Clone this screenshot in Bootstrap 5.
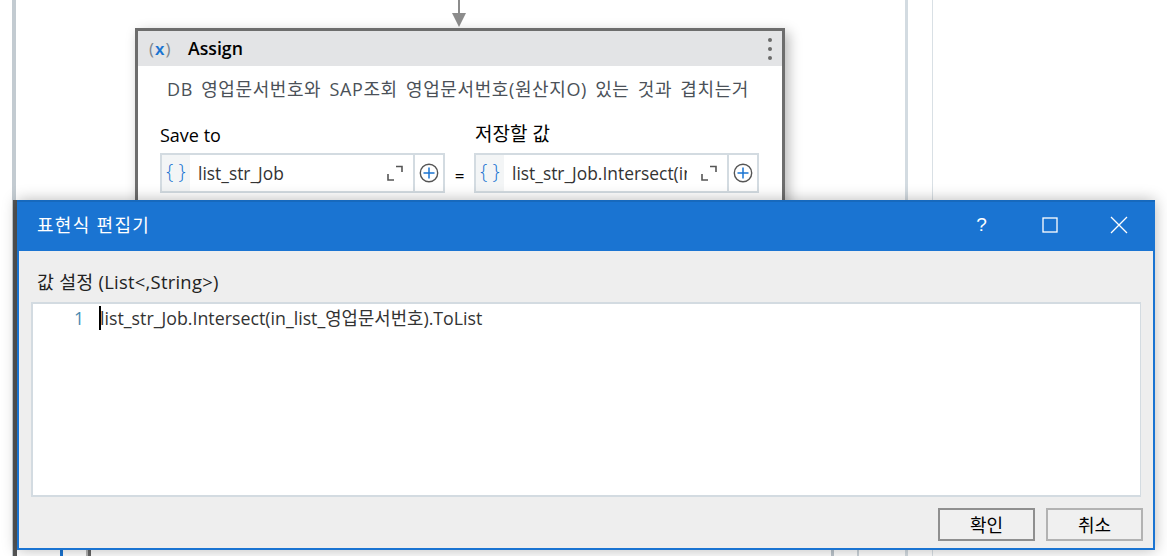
<!DOCTYPE html>
<html lang="ko"><head><meta charset="utf-8"><title>표현식 편집기</title>
<link rel="stylesheet" href="https://cdn.jsdelivr.net/npm/bootstrap@5.3.0/dist/css/bootstrap.min.css">
<style>
html,body{margin:0;height:100%;overflow:hidden;background:#fff}
body{font-family:"Open Sans","Noto Sans CJK KR",sans-serif;font-size:18px;color:#000}
.stage{position:relative;width:1167px;height:556px;overflow:hidden;background:#fff}
.vline{position:absolute;top:0;bottom:0}
.vl-a{left:12px;width:4px;background:#c3cbd1}
.vl-a2{left:13px;width:4px;top:200px;background:#555}
.vl-b{left:905px;width:3px;background:#d3dbe1}
.vl-c{left:932px;width:1px;background:#d9e0e5}
.vl-d{left:60px;width:3px;top:540px;background:#1a74d2}
.vl-e{left:86px;width:5px;top:540px;background:#666;border-left:2px solid #b5b5b5}
.vl-f{left:831px;width:3px;top:540px;background:#bcc5cc}
.vl-g{left:857px;width:2px;top:540px;background:#ccd4da}
.arrow{position:absolute;left:451px;top:0}
.activity{position:absolute;left:135px;top:28px;width:650px;height:190px;border:3px solid #6d6d6d;background:#fff;box-shadow:4px 4px 12px rgba(0,0,0,.28)}
.act-head{height:35px;background:#e3e4e6;padding:0 0 0 11px}
.act-title{font-weight:600;font-size:17.7px;margin-left:15px}
.xicon{width:24px;font-size:17px;color:#7d8790;white-space:nowrap;letter-spacing:1px;line-height:1}
.xicon b{color:#1a74d2;font-weight:800;font-family:"Liberation Sans",sans-serif}
.kebab{width:5px;margin:0 9px 0 auto}
.kebab i{display:block;width:4px;height:4px;border-radius:50%;background:#6a6a6a;margin:5px 0}
.act-desc{color:#4b5158;font-size:18px;line-height:24px;padding:11px 0 0 29px;white-space:nowrap;letter-spacing:.6px;word-spacing:3px}
.fields{padding:22px 0 0 22px}
.lbl{font-size:18px;line-height:24px;height:30px;white-space:nowrap}
.lbl-ko{font-size:19px;padding-left:1px;line-height:22px}
.fbox{height:40px;width:285px;border:2px solid #d3dbe1;background:#fff}
.fbrace{width:28px;align-self:stretch;background:#f3f5f6;color:#1a74d2;font-size:20px;font-weight:300;line-height:34px;text-align:center;flex:none}
.ftext{font-size:17.4px;color:#333;padding-left:8px;white-space:nowrap;overflow:hidden}
.ftext-clip{width:183px;flex:none}
.fexpand{margin:0 10px 0 auto;flex:none}
.fplus{border-left:2px solid #d3dbe1;flex:none;width:30px}
.eqs{width:29px;font-size:17px;line-height:17px;padding-top:44px;text-align:center}
.dialog{position:absolute;left:17px;top:200px;width:1138px;height:350px;background:#eee;border:2px solid #1a74d2;border-top:0;box-shadow:0 0 14px rgba(0,0,0,.28)}
.dlg-head{height:51px;background:#1a74d2;color:#fff;padding:0 0 3px 20px;margin:0 -2px;border-top:2px solid #1769bd}
.dlg-title{font-size:18px;letter-spacing:1.3px}
.dlg-ctl{margin-left:auto;margin-right:2px}
.dlg-ctl span{width:69px;height:32px}
.dlg-q{font-size:19px;font-family:"Liberation Sans",sans-serif;font-weight:400;padding-left:2px}
.val-lbl{font-size:18.4px;line-height:24px;padding:19px 0 0 18px;color:#222;letter-spacing:.25px}
.editor{margin:8px 12px 0 12px;height:195px;background:#fff;border:2px solid #d3dbe1;border-right-width:1px}
.gutter{width:51px;text-align:right;color:#4a8bb0;font-size:17.6px;line-height:24px;flex:none;padding-top:2px}
.codeline{font-size:17.8px;line-height:24px;color:#333;padding:2px 0 0 16px;position:relative;white-space:nowrap}
.caret-bar{position:absolute;left:15px;top:2px;width:2px;height:24px;background:#000}
.dlg-foot{padding:11px 10px 0 0;gap:11px}
.dbtn{width:97px;height:33px;border:2px solid #8f8f8f;background:#f0f0f0;font-size:18px;line-height:28px;padding:0;border-radius:0;color:#000}
.dbtn-alt{border-color:#b2b2b2}
</style></head><body>
<div class="stage">
<div class="vline vl-a"></div><div class="vline vl-a2"></div><div class="vline vl-b"></div><div class="vline vl-c"></div>
<div class="vline vl-d"></div><div class="vline vl-e"></div><div class="vline vl-f"></div><div class="vline vl-g"></div>
<svg class="arrow" width="16" height="28" viewBox="0 0 16 28"><path d="M8 0V14" stroke="#8c8c8c" stroke-width="2"/><path d="M1 13H15L8 27Z" fill="#8c8c8c"/></svg>
<div class="activity">
  <div class="act-head d-flex align-items-center">
    <span class="xicon">(<b>x</b>)</span><span class="act-title">Assign</span>
    <span class="kebab"><i></i><i></i><i></i></span>
  </div>
  <div class="act-desc">DB 영업문서번호와 SAP조회 영업문서번호(원산지O) 있는 것과 겹치는거</div>
  <div class="fields d-flex">
    <div>
      <div class="lbl">Save to</div>
      <div class="fbox d-flex align-items-center">
        <span class="fbrace">{ }</span><span class="ftext">list_str_Job</span>
        <svg class="fexpand" width="16" height="16" viewBox="0 0 16 16" fill="none" stroke="#555" stroke-width="1.6"><path d="M9 1.500H15V7M1 9V15H7"/></svg>
        <span class="fplus d-flex align-items-center justify-content-center align-self-stretch"><svg width="20" height="20" viewBox="0 0 20 20" fill="none"><circle cx="10" cy="10" r="8.700" stroke="#555" stroke-width="1.400"/><path d="M10 4.500V15.500M4.500 10H15.500" stroke="#1a74d2" stroke-width="1.500"/></svg></span>
      </div>
    </div>
    <div class="eqs">=</div>
    <div>
      <div class="lbl lbl-ko">저장할 값</div>
      <div class="fbox d-flex align-items-center">
        <span class="fbrace">{ }</span><span class="ftext ftext-clip">list_str_Job.Intersect(in_list</span>
        <svg class="fexpand" width="16" height="16" viewBox="0 0 16 16" fill="none" stroke="#555" stroke-width="1.6"><path d="M9 1.500H15V7M1 9V15H7"/></svg>
        <span class="fplus d-flex align-items-center justify-content-center align-self-stretch"><svg width="20" height="20" viewBox="0 0 20 20" fill="none"><circle cx="10" cy="10" r="8.700" stroke="#555" stroke-width="1.400"/><path d="M10 4.500V15.500M4.500 10H15.500" stroke="#1a74d2" stroke-width="1.500"/></svg></span>
      </div>
    </div>
  </div>
</div>
<div class="dialog">
  <div class="dlg-head d-flex align-items-center">
    <span class="dlg-title">표현식 편집기</span>
    <span class="dlg-ctl d-flex">
      <span class="dlg-q d-flex align-items-center justify-content-center">?</span>
      <span class="d-flex align-items-center justify-content-center"><svg width="16" height="16" viewBox="0 0 16 16" fill="none" stroke="#fff" stroke-width="1.300"><rect x="1" y="1" width="14" height="14"/></svg></span>
      <span class="d-flex align-items-center justify-content-center"><svg width="18" height="18" viewBox="0 0 18 18" fill="none" stroke="#fff" stroke-width="1.300"><path d="M1 1L17 17M17 1L1 17"/></svg></span>
    </span>
  </div>
  <div class="val-lbl">값 설정 (List&lt;,String&gt;)</div>
  <div class="editor d-flex">
    <div class="gutter">1</div>
    <div class="codeline"><span class="caret-bar"></span>list_str_Job.Intersect(in_list_영업문서번호).ToList</div>
  </div>
  <div class="dlg-foot d-flex justify-content-end">
    <button type="button" class="btn dbtn">확인</button>
    <button type="button" class="btn dbtn dbtn-alt">취소</button>
  </div>
</div>
</div>
<script src="https://cdn.jsdelivr.net/npm/bootstrap@5.3.0/dist/js/bootstrap.bundle.min.js"></script>
</body></html>
